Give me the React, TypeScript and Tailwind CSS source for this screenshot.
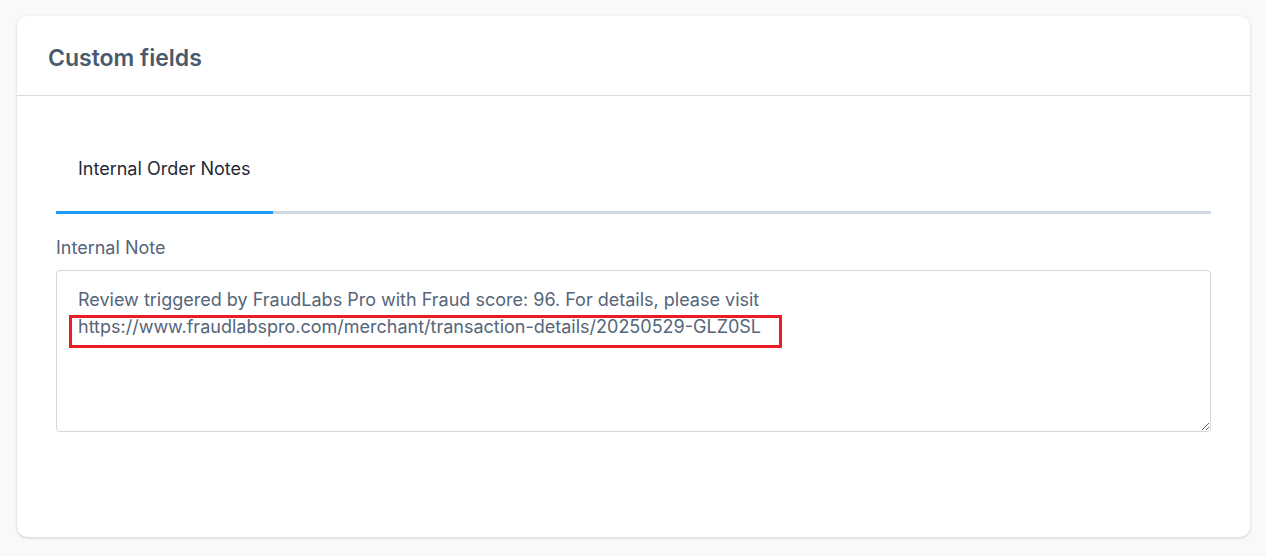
import { useState } from "react";

const NOTE =
  "Review triggered by FraudLabs Pro with Fraud score: 96. For details, please visit https://www.fraudlabspro.com/merchant/transaction-details/20250529-GLZ0SL";

export default function App() {
  const [note, setNote] = useState(NOTE);

  return (
    <div
      className="min-h-[556px] bg-[#f8f9fb] pt-4 pl-[17px] pr-4 pb-[19px]"
      style={{ fontFamily: "Inter, 'Noto Sans', sans-serif" }}
    >
      <div className="rounded-[10px] bg-white shadow-[0_1px_3px_rgba(0,0,0,0.18)]">
        <div className="flex h-[80px] items-center border-b border-[#d5dbe3] px-[31px] pt-[5px]">
          <h2 className="text-[23px] font-semibold text-[#4a5a6e]">Custom fields</h2>
        </div>

        <div className="px-[39px] pt-[30px] pb-[105px]">
          <div className="flex border-b-[3px] border-[#cfd8e1]">
            <button className="-mb-[3px] border-b-[3px] border-[#1a9bfc] px-[22px] pt-[31px] pb-[30px] text-[18px] leading-6 text-[#1f2937]">
              Internal Order Notes
            </button>
          </div>

          <label className="mt-[22px] block text-[18px] leading-6 text-[#55657a]">Internal Note</label>

          <div className="relative mt-[10px]">
            <textarea
              value={note}
              onChange={(e) => setNote(e.target.value)}
              className="block h-[162px] w-full rounded-[4px] border border-[#d1d9e1] bg-white pl-[21px] pr-[300px] pt-[15px] text-[18px] leading-[27px] text-[#55657a] outline-none"
              style={{ fontFamily: "Inter, 'Noto Sans', sans-serif" }}
            />
            {/* highlight over the link */}
            <div className="pointer-events-none absolute left-[13px] top-[45px] h-[33px] w-[713px] border-[3px] border-[#ea1c24]" />
          </div>
        </div>
      </div>
    </div>
  );
}
